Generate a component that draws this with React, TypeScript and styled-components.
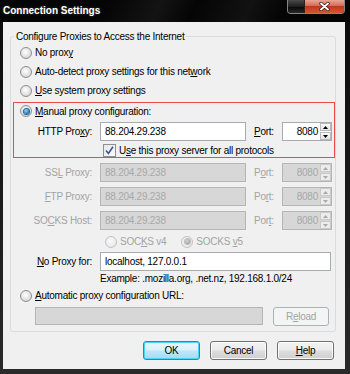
import React from 'react';
import styled, { createGlobalStyle, css } from 'styled-components';

const Global = createGlobalStyle`
  html, body { margin: 0; padding: 0; background: #1a1a1a; }
  body { width: 350px; height: 374px; overflow: hidden; font-family: "Liberation Sans", Arial, sans-serif; }
  * { box-sizing: border-box; }
`;

const Window = styled.div`
  width: 350px;
  height: 374px;
  display: flex;
  flex-direction: column;
  background: linear-gradient(180deg, #0a0a0a 0%, #2a2a2a 100%);
`;

const TitleBar = styled.div`
  height: 22px;
  flex: none;
  display: flex;
  align-items: flex-start;
  background:
    linear-gradient(115deg, rgba(255,255,255,0) 30%, rgba(255,255,255,0.06) 45%, rgba(255,255,255,0) 55%, rgba(255,255,255,0.05) 70%, rgba(255,255,255,0) 80%),
    #050505;
`;

const Title = styled.div`
  color: #fff;
  font-weight: bold;
  font-size: 10px;
  line-height: 22px;
  padding-left: 3px;
  text-shadow: 0 0 3px rgba(255,255,255,0.25);
`;

const Caption = styled.div`
  display: flex;
  margin-left: auto;
  margin-right: 5px;
  height: 14px;
  border: 1px solid rgba(190,190,190,0.7);
  border-top: none;
  border-radius: 0 0 4px 4px;
  overflow: hidden;
`;

const MaxButton = styled.div`
  width: 16px;
  background: linear-gradient(180deg, #4a4a4a 0%, #1e1e1e 50%, #050505 51%, #2a2a2a 100%);
`;

const CloseButton = styled.div`
  width: 40px;
  border-left: 1px solid #3a1a14;
  display: flex;
  align-items: center;
  justify-content: center;
  background: linear-gradient(180deg, #e9a595 0%, #d36a55 45%, #c2381f 50%, #d5542f 100%);
`;

const Body = styled.div`
  flex: 1;
  margin: 0 5px 5px 3px;
  background: #f0f0f0;
  display: flex;
  flex-direction: column;
  padding: 8px 9px 9px 7px;
  font-size: 10px;
  letter-spacing: -0.25px;
  color: #000;
`;

const Group = styled.fieldset`
  margin: 0;
  min-width: 0;
  padding: 0 1px 6px 3px;
  border: 1px solid #d8dcdf;
  border-radius: 3px;
  display: flex;
  flex-direction: column;
`;

const Legend = styled.legend`
  padding: 0 2px;
  line-height: 13px;
  font-size: 10px;
`;

const Key = styled.span`
  text-decoration: underline;
`;

const RadioRow = styled.div<{ $h?: number; $indent?: number; $gap?: number; $mt?: number }>`
  display: flex;
  align-items: center;
  height: ${p => p.$h ?? 19}px;
  padding-left: ${p => p.$indent ?? 6}px;
  gap: ${p => p.$gap ?? 0}px;
  margin-top: ${p => p.$mt ?? 0}px;
`;

const RadioLabel = styled.label<{ $disabled?: boolean }>`
  display: flex;
  align-items: center;
  gap: 3px;
  white-space: nowrap;
  color: ${p => (p.$disabled ? '#a3a3a3' : '#000')};
`;

const RadioDot = styled.span<{ $checked?: boolean; $disabled?: boolean }>`
  width: 12px;
  height: 12px;
  border-radius: 50%;
  flex: none;
  display: flex;
  align-items: center;
  justify-content: center;
  border: 1px solid ${p => (p.$disabled ? '#c2c2c2' : '#8e8f8f')};
  background: ${p =>
    p.$disabled
      ? 'radial-gradient(circle at 45% 40%, #fafafa 0%, #ececec 60%, #e0e0e0 100%)'
      : 'radial-gradient(circle at 45% 40%, #ffffff 0%, #e2e2e2 55%, #c6c6c6 100%)'};
  &::after {
    content: '';
    display: ${p => (p.$checked ? 'block' : 'none')};
    width: 5px;
    height: 5px;
    border-radius: 50%;
    background: ${p =>
      p.$disabled
        ? 'radial-gradient(circle at 40% 35%, #d8d8d8, #8c8c8c)'
        : 'radial-gradient(circle at 40% 35%, #8ee0ff, #1e6fb8 70%, #0c4c8c)'};
    box-shadow: ${p => (p.$disabled ? '0 0 0 1px #bcbcbc' : '0 0 0 1px #2b5f94')};
  }
`;

const ManualBox = styled.div`
  margin-top: 3px;
  box-shadow: 0 0 0 1px #ec4a4a;
  display: flex;
  flex-direction: column;
`;

const ProxyRow = styled.div<{ $mt: number }>`
  display: grid;
  grid-template-columns: 78px 146px 20px 50px;
  column-gap: 8px;
  align-items: center;
  height: 19px;
  margin-top: ${p => p.$mt}px;
`;

const WideRow = styled.div<{ $mt: number }>`
  display: grid;
  grid-template-columns: 78px 231px;
  column-gap: 8px;
  align-items: center;
  height: 19px;
  margin-top: ${p => p.$mt}px;
`;

const FieldLabel = styled.span<{ $disabled?: boolean; $align?: 'end' | 'start' }>`
  justify-self: ${p => p.$align ?? 'end'};
  white-space: nowrap;
  color: ${p => (p.$disabled ? '#a3a3a3' : '#000')};
`;

const TextBox = styled.div<{ $disabled?: boolean; $w?: number }>`
  height: ${p => (p.$w ? 18 : 19)}px;
  width: ${p => (p.$w ? `${p.$w}px` : 'auto')};
  border: 1px solid ${p => (p.$disabled ? '#b5b5b5' : '#a9abb2')};
  background: ${p => (p.$disabled ? '#d7d7d7' : '#fff')};
  color: ${p => (p.$disabled ? '#a8a8a8' : '#000')};
  padding: 0 4px;
  display: flex;
  align-items: center;
  white-space: nowrap;
  overflow: hidden;
`;

const PortBox = styled.div<{ $disabled?: boolean }>`
  height: 19px;
  display: flex;
  border: 1px solid ${p => (p.$disabled ? '#b5b5b5' : '#a9abb2')};
  background: ${p => (p.$disabled ? '#d7d7d7' : '#fff')};
`;

const PortValue = styled.div<{ $disabled?: boolean }>`
  flex: 1;
  display: flex;
  align-items: center;
  justify-content: flex-end;
  padding-right: 2px;
  color: ${p => (p.$disabled ? '#a8a8a8' : '#000')};
`;

const Spinner = styled.div`
  width: 11px;
  display: flex;
  flex-direction: column;
  gap: 1px;
`;

const SpinButton = styled.div<{ $disabled?: boolean }>`
  flex: 1;
  display: flex;
  align-items: center;
  justify-content: center;
  border: 1px solid ${p => (p.$disabled ? '#c9c9c9' : '#b7b9bd')};
  background: ${p => (p.$disabled ? '#ececec' : 'linear-gradient(180deg, #fafafa, #e3e3e3)')};
`;

const CheckRow = styled.label`
  display: flex;
  align-items: center;
  gap: 3px;
  height: 13px;
  margin-top: 3px;
  padding-left: 89px;
  white-space: nowrap;
`;

const CheckBox = styled.span`
  width: 13px;
  height: 13px;
  flex: none;
  border: 1px solid #8e8f8f;
  background: linear-gradient(135deg, #e6e6e6, #fbfbfb);
  display: flex;
  align-items: center;
  justify-content: center;
`;

const Hint = styled.div`
  height: 13px;
  line-height: 13px;
  margin-top: 1px;
  padding-left: 86px;
  white-space: nowrap;
`;

const UrlRow = styled.div`
  display: flex;
  align-items: center;
  gap: 10px;
  height: 18px;
  margin-top: 2px;
  padding-left: 21px;
`;

const Button = styled.button<{ $default?: boolean; $w?: number }>`
  width: ${p => p.$w ?? 57}px;
  height: 19px;
  padding: 0;
  margin: 0;
  font-family: "Liberation Sans", Arial, sans-serif;
  font-size: 10px;
  letter-spacing: -0.25px;
  color: #000;
  border: 1px solid #707070;
  border-radius: 3px;
  background: linear-gradient(180deg, #f3f3f3 0%, #ebebeb 48%, #dddddd 52%, #cfcfcf 100%);
  box-shadow: inset 0 0 0 1px rgba(255,255,255,0.85);
  ${p =>
    p.$default &&
    css`
      border-color: #3c7fb1;
      box-shadow: inset 0 0 0 1px #48d3fb;
      background: linear-gradient(180deg, #eaf6fd 0%, #d9f0fc 48%, #bee6fd 52%, #a7d9f5 100%);
    `}
  &:disabled {
    color: #a3a3a3;
    border-color: #adb2b5;
    background: #f4f4f4;
    box-shadow: none;
  }
`;

const ButtonRow = styled.div`
  display: flex;
  justify-content: flex-end;
  gap: 10px;
  margin-top: 9px;
  padding-right: 2px;
`;

const Arrow = ({ up, disabled }: { up?: boolean; disabled?: boolean }) => (
  <svg width="5" height="3" viewBox="0 0 5 3">
    <path d={up ? 'M0 3 L2.5 0 L5 3 Z' : 'M0 0 L5 0 L2.5 3 Z'} fill={disabled ? '#a8a8a8' : '#000'} />
  </svg>
);

const Port = ({ disabled }: { disabled?: boolean }) => (
  <PortBox $disabled={disabled}>
    <PortValue $disabled={disabled}>8080</PortValue>
    <Spinner>
      <SpinButton $disabled={disabled}><Arrow up disabled={disabled} /></SpinButton>
      <SpinButton $disabled={disabled}><Arrow disabled={disabled} /></SpinButton>
    </Spinner>
  </PortBox>
);

const Radio = ({ checked, disabled, children }: { checked?: boolean; disabled?: boolean; children: React.ReactNode }) => (
  <RadioLabel $disabled={disabled}>
    <RadioDot $checked={checked} $disabled={disabled} />
    <span>{children}</span>
  </RadioLabel>
);

const rows: { pre: string; key: string; post: string; portKey: [string, string, string] }[] = [
  { pre: 'SS', key: 'L', post: ' Proxy:', portKey: ['P', 'o', 'rt:'] },
  { pre: '', key: 'F', post: 'TP Proxy:', portKey: ['Po', 'r', 't:'] },
  { pre: 'SO', key: 'C', post: 'KS Host:', portKey: ['Por', 't', ':'] },
];

export default function App() {
  return (
    <>
      <Global />
      <Window>
        <TitleBar>
          <Title>Connection Settings</Title>
          <Caption>
            <MaxButton />
            <CloseButton>
              <svg width="11" height="9" viewBox="0 0 11 9">
                <path d="M2 1.5 L9 7.5 M9 1.5 L2 7.5" stroke="#3a1f1a" strokeWidth="3.4" strokeLinecap="round" />
                <path d="M2 1.5 L9 7.5 M9 1.5 L2 7.5" stroke="#ffffff" strokeWidth="1.8" strokeLinecap="round" />
              </svg>
            </CloseButton>
          </Caption>
        </TitleBar>
        <Body>
          <Group>
            <Legend>Configure Proxies to Access the Internet</Legend>
            <RadioRow>
              <Radio>No prox<Key>y</Key></Radio>
            </RadioRow>
            <RadioRow>
              <Radio>Auto-detect proxy settings for this net<Key>w</Key>ork</Radio>
            </RadioRow>
            <RadioRow>
              <Radio><Key>U</Key>se system proxy settings</Radio>
            </RadioRow>
            <ManualBox>
              <RadioRow $h={16}>
                <Radio checked><Key>M</Key>anual proxy configuration:</Radio>
              </RadioRow>
              <ProxyRow $mt={3}>
                <FieldLabel>HTTP Pro<Key>x</Key>y:</FieldLabel>
                <TextBox>88.204.29.238</TextBox>
                <FieldLabel $align="start"><Key>P</Key>ort:</FieldLabel>
                <Port />
              </ProxyRow>
              <CheckRow>
                <CheckBox>
                  <svg width="9" height="9" viewBox="0 0 9 9">
                    <path d="M1 4.6 L3.4 7.4 L8 0.8" stroke="#3d5392" strokeWidth="1.6" fill="none" />
                  </svg>
                </CheckBox>
                <span>U<Key>s</Key>e this proxy server for all protocols</span>
              </CheckRow>
            </ManualBox>
            {rows.map((r, i) => (
              <ProxyRow key={r.post} $mt={i === 0 ? 6 : 5}>
                <FieldLabel $disabled>{r.pre}<Key>{r.key}</Key>{r.post}</FieldLabel>
                <TextBox $disabled>88.204.29.238</TextBox>
                <FieldLabel $disabled $align="start">{r.portKey[0]}<Key>{r.portKey[1]}</Key>{r.portKey[2]}</FieldLabel>
                <Port disabled />
              </ProxyRow>
            ))}
            <RadioRow $indent={91} $gap={15} $mt={2}>
              <Radio disabled>SOC<Key>K</Key>S v4</Radio>
              <Radio disabled checked>SOCKS <Key>v</Key>5</Radio>
            </RadioRow>
            <WideRow $mt={1}>
              <FieldLabel><Key>N</Key>o Proxy for:</FieldLabel>
              <TextBox>localhost, 127.0.0.1</TextBox>
            </WideRow>
            <Hint>Example: .mozilla.org, .net.nz, 192.168.1.0/24</Hint>
            <RadioRow $mt={1}>
              <Radio><Key>A</Key>utomatic proxy configuration URL:</Radio>
            </RadioRow>
            <UrlRow>
              <TextBox $disabled $w={228} />
              <Button disabled $w={56}>R<Key>e</Key>load</Button>
            </UrlRow>
          </Group>
          <ButtonRow>
            <Button $default>OK</Button>
            <Button>Cancel</Button>
            <Button><Key>H</Key>elp</Button>
          </ButtonRow>
        </Body>
      </Window>
    </>
  );
}
